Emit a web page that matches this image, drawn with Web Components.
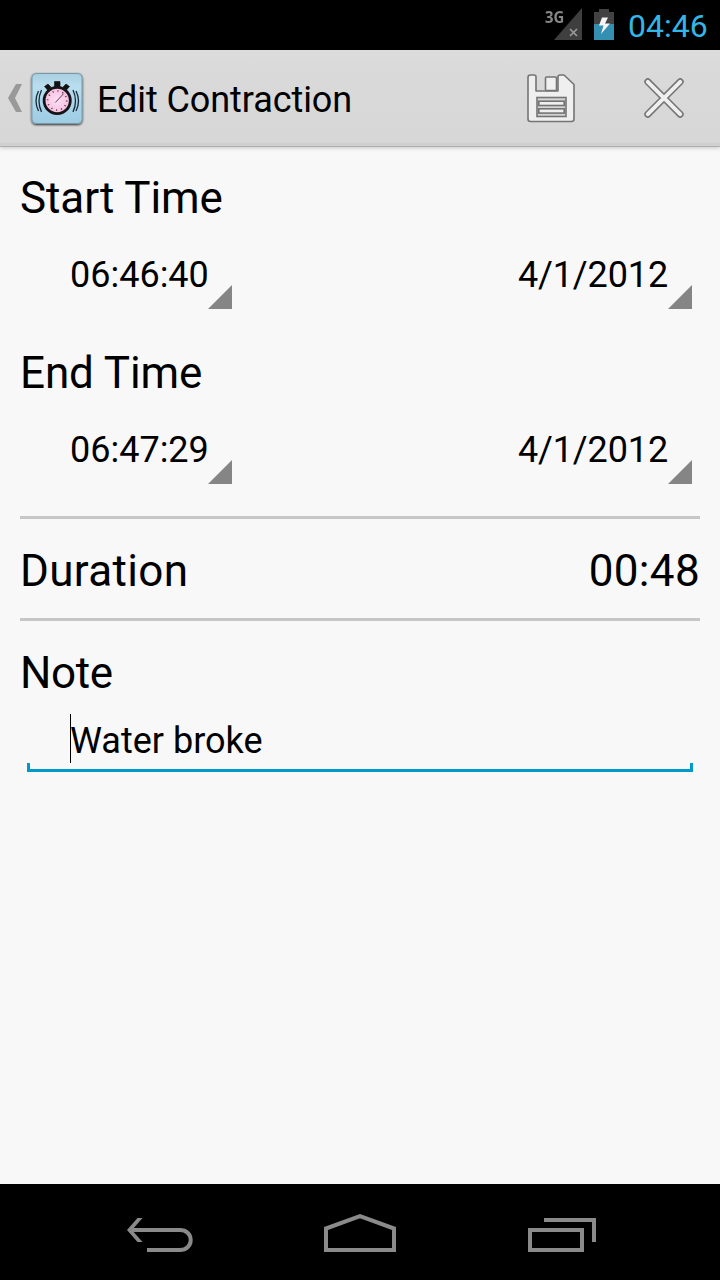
<!DOCTYPE html>
<html lang="en"><head><meta charset="utf-8"><title>Edit Contraction</title>
<style>html,body{margin:0;height:100%;background:#f8f8f8;overflow:hidden}body{font-family:Roboto,"Noto Sans",sans-serif;color:#000}</style></head>
<body><edit-screen></edit-screen>
<script>
const define=(name,html)=>customElements.define(name,class extends HTMLElement{
  constructor(){super();const t=document.createElement('template');t.innerHTML=html;
    this.attachShadow({mode:'open'}).append(t.content.cloneNode(true));}
});
define('status-bar',`<style>
:host{display:flex;height:50px;background:#000;justify-content:flex-end;color:#33b5e5;box-sizing:border-box;padding-right:12px}
svg{flex:none;display:block}.clock{font-size:32px;line-height:38px;padding-top:7px;width:80px;white-space:nowrap}
.net{font:bold 16px/18px "Open Sans","Noto Sans",sans-serif;color:#868686;width:20px;padding-top:8px;margin-right:-11px;z-index:1;transform:scaleX(.93);transform-origin:left}
.bat{margin-left:12px;margin-right:14px}
</style>
<span class="net">3G</span>
<svg width="28" height="50"><path d="M28 8V40H0z" fill="#3f3f3f"/><path d="M16 29l7 7m0-7l-7 7" stroke="#999" stroke-width="1.7"/></svg>
<svg class="bat" width="20" height="50"><path d="M5 9h10v3h5v12H0V12h5z" fill="#424242"/><path d="M0 24h20v16H0z" fill="#348fb3"/><path d="M8 17.500h6l-3 6h5L7 34l2.500-8.500H5z" fill="#f5f5f5"/></svg>
<span class="clock">04:46</span>`);
define('app-icon',`<style>:host{display:block;width:60px;height:60px}svg{display:block}</style>
<svg width="60" height="60" viewBox="0 0 60 60"><defs><linearGradient id="b" x2="0" y2="1"><stop stop-color="#a9cee0"/><stop offset=".25" stop-color="#b9def0"/><stop offset="1" stop-color="#9dcce4"/></linearGradient><radialGradient id="p"><stop stop-color="#ffe0f4"/><stop offset="1" stop-color="#f4bddf"/></radialGradient><filter id="s" x="-20%" y="-20%" width="140%" height="140%"><feDropShadow dx="0" dy="1" stdDeviation="1.3" flood-opacity=".8"/></filter></defs>
<rect x="5" y="5.500" width="50" height="50" rx="4" fill="url(#b)" stroke="#7799aa" filter="url(#s)"/>
<path d="M27.500 13.500h5.500v6h-5.500zM17.500 18.500l3.500-2.500 3 3-3 3.500zM42.500 18.500l-3.500-2.500-3 3 3 3.500z" fill="#111" stroke="#111" stroke-width=".6" stroke-linejoin="round"/>
<circle cx="30.200" cy="32.500" r="13.100" fill="url(#p)" stroke="#171317" stroke-width="2.8"/>
<circle cx="30.200" cy="32.500" r="9.500" fill="none" stroke="#50303f" stroke-width="1.6" stroke-dasharray="1 3.974"/>
<path d="M28.300 34.500l8.500-9" stroke="#643b54"/>
<path d="M14.500 22q-5 11 0 22M11.500 23q-5 10 0 20M46 22q5 11 0 22M49 23q5 10 0 20" fill="none" stroke="#182a35" stroke-width="1.3"/></svg>`);
define('action-bar',`<style>
:host{display:flex;height:97px;box-sizing:border-box;background:linear-gradient(#dcdcdc,#d9d9d9 30%,#d7d7d7 96%,#d0d0d0 97%);border-bottom:1px solid #b0b0b0;box-shadow:0 1px 4px #0003;align-items:flex-start;position:relative}
svg{display:block}.up{margin:33px 0 0 8px}app-icon{margin:18px 0 0 5px}
.title{font-size:36px;line-height:42px;margin:29px 0 0 10px;white-space:nowrap;flex:1;letter-spacing:-.08px}
.save{margin:23px 67px 0 0}.x{margin:27px 35px 0 0}
</style>
<svg class="up" width="14" height="30"><path d="M8 1h6L7 15l7 14H8L0 15z" fill="#999"/></svg>
<app-icon></app-icon><span class="title"><slot></slot></span>
<svg class="save" width="49" height="51" viewBox="0 0 49 51" fill="#efefef" stroke="#747474" stroke-width="1.6"><path d="M3.500 2H7q2 0 2 2v14h22V4q0-2 2-2h4l10 9.500V46q0 2.500-2.500 2.500h-41Q1 48.500 1 46V4.500Q1 2 3.500 2z" stroke-linejoin="round"/><rect x="18.500" y="4" width="11" height="13.500" rx="1"/><rect x="10" y="24.500" width="29" height="19" fill="#d4d4d4"/><rect x="11.800" y="28.200" width="25.400" height="4.300"/><rect x="11.800" y="35.800" width="25.400" height="4.300"/></svg>
<svg class="x" width="42" height="42" viewBox="0 0 42 42"><path d="M4.800 4.800l32.400 32.400m0-32.400l-32.400 32.400" stroke="#747474" stroke-width="7" stroke-linecap="round"/><path d="M4.800 4.800l32.400 32.400m0-32.400l-32.400 32.400" stroke="#efefef" stroke-width="4" stroke-linecap="round"/></svg>`);
define('section-title',`<style>:host{display:block;font-size:44px;line-height:52px;white-space:nowrap;letter-spacing:-.1px}</style><slot></slot>`);
define('spinner-field',`<style>:host{display:flex;font-size:36px;line-height:42px;height:56px;white-space:nowrap}span{padding-top:1px;letter-spacing:var(--track,0)}svg{display:block;margin:32px 0 0 var(--gap,-1px)}</style><span><slot></slot></span><svg width="24" height="24"><path d="M24 0V24H0z" fill="#858585"/></svg>`);
define('time-row',`<style>:host{display:flex;justify-content:space-between;padding:0 8px 0 50px;margin-top:29px;height:56px}::slotted(:last-child){--track:-.13px;--gap:0px}</style><slot></slot>`);
define('duration-row',`<style>:host{display:flex;justify-content:space-between;box-sizing:border-box;height:105px;border:solid #c6c6c6;border-width:3px 0;font-size:44px;line-height:52px;padding-top:26px;margin-top:32px;letter-spacing:.35px}</style><slot name="label"></slot><slot name="value"></slot>`);
define('note-field',`<style>:host{display:flex;box-sizing:border-box;height:58px;margin:15px 7px 0;padding-left:43px;font-size:36px;line-height:42px;
background:linear-gradient(#0099cc,#0099cc) bottom/100% 3px no-repeat,linear-gradient(#0099cc,#0099cc) left bottom/3px 9px no-repeat,linear-gradient(#0099cc,#0099cc) right bottom/3px 9px no-repeat}
i{width:1px;height:49px;background:#000;margin-right:-1px}span{padding-top:6px;white-space:nowrap}</style><i></i><span><slot></slot></span>`);
define('nav-bar',`<style>:host{display:grid;grid-template-columns:124px 196px 204px 1fr;height:96px;background:#000}svg{display:block;grid-row:1}svg:nth-of-type(1){grid-column:2}svg:nth-of-type(2){grid-column:3}svg:nth-of-type(3){grid-column:4}</style>
<svg width="76" height="96" fill="none" stroke="#8a8a8a" stroke-width="4"><path d="M6 46H56c6 0 10.700 4 10.700 10S62 66 56 66H23"/><path d="M18.500 34h-5L3 46l10.500 12h5L8 46z" fill="#8a8a8a" stroke="none"/></svg>
<svg width="80" height="96" fill="none" stroke="#8a8a8a" stroke-width="4"><path d="M6 66V44.500l34-12.300 34 12.300V66z"/></svg>
<svg width="80" height="96" fill="none" stroke="#8a8a8a" stroke-width="4"><path d="M6 46h52v20H6zM20 36h50v22"/></svg>`);
define('edit-screen',`<style>:host{display:flex;flex-direction:column;width:720px;height:1280px;background:#f8f8f8}main{flex:1;padding:25px 20px 0}.end{margin-top:38px}.note{margin-top:26px;letter-spacing:-.4px}</style>
<status-bar></status-bar><action-bar>Edit Contraction</action-bar>
<main><section-title>Start Time</section-title><time-row><spinner-field>06:46:40</spinner-field><spinner-field>4/1/2012</spinner-field></time-row>
<section-title class="end">End Time</section-title><time-row><spinner-field>06:47:29</spinner-field><spinner-field>4/1/2012</spinner-field></time-row>
<duration-row><span slot="label">Duration</span><span slot="value">00:48</span></duration-row>
<section-title class="note">Note</section-title><note-field>Water broke</note-field></main><nav-bar></nav-bar>`);
</script></body></html>
